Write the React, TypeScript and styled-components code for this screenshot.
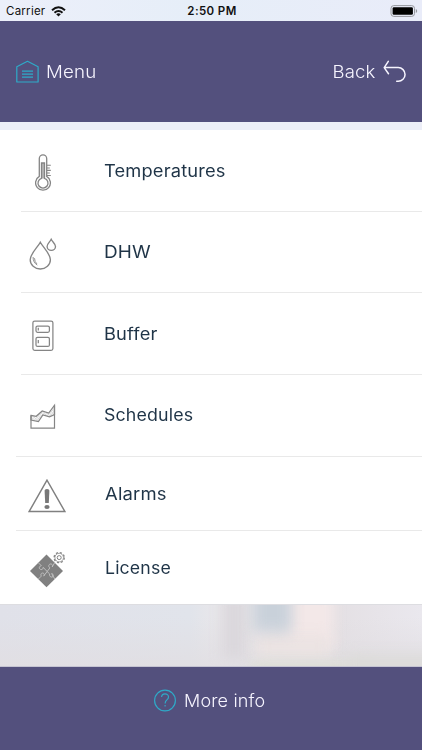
import React from "react";
import styled, { createGlobalStyle } from "styled-components";

const GlobalStyle = createGlobalStyle`
  * { box-sizing: border-box; }
  body { margin: 0; background: #e8ecf7; }
`;

const Screen = styled.div`
  width: 422px;
  height: 750px;
  display: flex;
  flex-direction: column;
  overflow: hidden;
  background: #eceef7;
  font-family: Inter, sans-serif;
`;

const StatusBar = styled.div`
  height: 21px;
  flex: none;
  display: grid;
  grid-template-columns: 1fr auto 1fr;
  align-items: center;
  padding: 1px 4px 0 6px;
  background: linear-gradient(90deg, #eceffa, #e6eef8 45%, #e9ecf9);
  color: #111;
  font-size: 11.5px;
  line-height: 20px;
`;

const Carrier = styled.div`
  display: flex;
  align-items: center;
  gap: 6px;
  letter-spacing: 0.25px;
`;

const Clock = styled.div`
  font-weight: 600;
  letter-spacing: 0.4px;
`;

const BatterySlot = styled.div`
  display: flex;
  justify-content: flex-end;
`;

const Header = styled.header`
  height: 101px;
  flex: none;
  display: flex;
  justify-content: space-between;
  align-items: flex-start;
  padding: 37px 16px 0;
  background: #53507d;
`;

const Action = styled.div<{ $gap: number }>`
  display: flex;
  align-items: center;
  gap: ${(p) => p.$gap}px;
  height: 26px;
`;

const Label = styled.span<{ $stretch: number; $light?: boolean; $drop?: number; $origin?: "left" | "right" }>`
  display: inline-block;
  justify-self: start;
  padding-top: ${(p) => (p.$drop ?? 0) * 2}px;
  font-size: 17px;
  line-height: 24px;
  white-space: nowrap;
  font-weight: ${(p) => (p.$light ? 300 : 400)};
  color: ${(p) => (p.$light ? "#f7f5ff" : "#1f3447")};
  letter-spacing: 0.15px;
  transform: scaleX(${(p) => p.$stretch});
  transform-origin: ${(p) => p.$origin ?? "left"} center;
`;

const List = styled.main`
  flex: none;
  height: 474px;
  margin-top: 8px;
  background: #fff;
`;

const Row = styled.div<{ $height: number; $inset: number; $shift: number; $text: number; $last?: boolean }>`
  height: ${(p) => p.$height}px;
  margin-left: ${(p) => p.$inset}px;
  padding-bottom: ${(p) => p.$shift}px;
  display: grid;
  grid-template-columns: ${(p) => p.$text - p.$inset}px 1fr;
  align-items: center;
  border-bottom: ${(p) => (p.$last ? "none" : "1px solid #e9e9e9")};
`;

const IconSlot = styled.div<{ $offset: number }>`
  display: flex;
  padding-left: ${(p) => p.$offset}px;
  height: 40px;
  margin-top: 4px;
`;

const Backdrop = styled.div`
  position: relative;
  height: 63px;
  flex: none;
  overflow: hidden;
  border-top: 1px solid #dddde1;
  border-bottom: 1px solid #c5c4d2;
  background:
    linear-gradient(180deg, rgba(225, 224, 229, 0) 20%, rgba(225, 222, 226, 0.8)),
    linear-gradient(90deg, #e0e1e9, #e1e4eb 45%, #e9e7ea 52%, #e4e0e4 80%, #eae8ee);
`;

const Haze = styled.div<{ $x: number; $y: number; $w: number; $h: number; $color: string }>`
  position: absolute;
  left: ${(p) => p.$x}px;
  top: ${(p) => p.$y}px;
  width: ${(p) => p.$w}px;
  height: ${(p) => p.$h}px;
  background: ${(p) => p.$color};
  filter: blur(7px);
`;

const Footer = styled.footer`
  flex: 1;
  display: flex;
  justify-content: center;
  align-items: flex-start;
  padding: 21px 8px 0 0;
  background: #53507d;
`;

const Wifi = () => (
  <svg width="15" height="11" viewBox="0 0 15 11" fill="none" stroke="#111" strokeWidth="2">
    <path d="M1 4.2Q7.5-1.6 14 4.2M3.5 6.7Q7.5 3.2 11.5 6.7" />
    <path d="M5.2 8.2Q7.5 6.4 9.8 8.2L7.5 10.5z" fill="#111" stroke="none" />
  </svg>
);

const Battery = () => (
  <svg width="28" height="12" viewBox="0 0 28 12">
    <rect x="1" y=".6" width="23.5" height="10.8" rx="2.8" fill="none" stroke="#96989e" />
    <rect x="2.6" y="2.2" width="20.3" height="7.6" rx="1.3" fill="#000" />
    <path d="M25.8 4v4q1.4-.5 1.4-2t-1.4-2z" fill="#96989e" />
  </svg>
);

const House = () => (
  <svg width="23" height="23" viewBox="0 0 23 23" fill="none" stroke="#2eabc9" strokeWidth="1.2">
    <path d="M.8 22V6.8L11.5 1.3 22.1 6.8V22z" strokeLinejoin="round" />
    <path d="M6 11.2h11M6 14.2h11M6 17.2h11" />
  </svg>
);

const BackArrow = () => (
  <svg width="23" height="23" viewBox="0 0 23 23" fill="none" stroke="#f7f5ff" strokeWidth="1.5" strokeLinecap="round" strokeLinejoin="round">
    <path d="M5.3 1.3L1.2 7.6l4.3 6.1M1.4 7.6h13.8a6.8 6.8 0 0 1 0 13.7h-1.5" />
  </svg>
);

const Question = () => (
  <svg width="23" height="24" viewBox="0 0 23 24" fill="none" stroke="#2eabc9" strokeWidth="1.15">
    <circle cx="11" cy="11.5" r="10.4" />
    <path d="M7.6 8.1C7.6 3.7 14.5 3.9 14.5 7.9c0 3.2-3.4 2.8-3.4 6.5M11.1 16v1.6" />
  </svg>
);

const Thermometer = () => (
  <svg width="18" height="40" viewBox="0 0 18 40" fill="none" stroke="#858585" strokeWidth="1.3">
    <path d="M4.3 23.4V5.6a3.7 3.7 0 0 1 7.4 0v17.8a7.4 7.4 0 1 1-7.4 0z" />
    <path d="M6.5 25.3V10h3v15.3a5 5 0 1 1-3 0z" />
    <path d="M7.5 10v15.5M8.5 10v15.5" strokeWidth=".6" />
    <path d="M12 12.3h3.8M12 15h2.8M12 17.4h3.8M12 20h2.8M12 22.5h3.8" strokeWidth="1.1" />
  </svg>
);

const Drops = () => (
  <svg width="28" height="40" viewBox="0 0 28 40" fill="none" stroke="#858585" strokeWidth="1.35">
    <path d="M11.3 8.2C9 13 1.2 19.7 1.2 25.7a10.1 9.3 0 0 0 20.2 0C21.4 19.7 13.8 13 11.3 8.2z" />
    <path d="M22.2 5.3c-1.2 2.6-4.1 4.6-4.1 7.1a4.2 4 0 0 0 8.4 0c0-2.5-3.1-4.5-4.3-7.1z" />
    <path d="M4.1 23q-.1 5.5 4.2 8.1M5.5 24.2q.1 3.7 2.4 5.7" strokeWidth=".9" />
  </svg>
);

const Tank = () => (
  <svg width="22" height="40" viewBox="0 0 22 40" fill="none" stroke="#858585" strokeWidth="1.25">
    <rect x=".9" y="5" width="20" height="29.3" rx="1.8" />
    <rect x="4" y="10" width="13.4" height="6.3" rx="1.5" />
    <rect x="4" y="21.3" width="13.4" height="9.1" rx="1.5" />
    <path d="M6.3 11.8v2.8M6.3 24v3.2" />
  </svg>
);

const AreaChart = () => (
  <svg width="26" height="40" viewBox="0 0 26 40" fill="none" stroke="#858585" strokeWidth="1.2">
    <defs>
      <pattern id="mesh" width="2" height="2" patternUnits="userSpaceOnUse" patternTransform="rotate(45)">
        <path d="M0 0h2M0 0v2" stroke="#aaa" strokeWidth=".6" />
      </pattern>
    </defs>
    <g transform="translate(0 4)">
      <path d="M1 14.4l5.2.9 6-5.3 6.5 2 5.8-7.8v9.3l-5 2.4-6.6-2-4.5 6.7L1 19z" fill="url(#mesh)" />
      <path d="M1 14.4v12.8h23.5v-23" />
    </g>
  </svg>
);

const Warning = () => (
  <svg width="38" height="40" viewBox="0 0 38 40">
    <path d="M19 4.2L1.2 35.4h35.6z" fill="none" stroke="#808080" strokeWidth="1.45" />
    <path d="M16.6 14.8q0-1.8 2.4-1.8t2.4 1.8l-.6 12.2h-3.6z" fill="#777" />
    <ellipse cx="19" cy="31" rx="2.6" ry="2.1" fill="#777" />
  </svg>
);

const Puzzle = () => (
  <svg width="38" height="40" viewBox="0 0 38 40" fill="none">
    <path d="M17.5 4.4L34 20.9 17.5 37.2 1 20.9z" fill="#808080" />
    <g transform="translate(0 -.8)" stroke="#c4c4c4" strokeWidth=".9">
      <path d="M9.3 13.5l3 3c-3.2.7-2.2 4.6.7 3.7 1.3-.4 1.2-2.1 1.2-2.1l3.3 3.6 3.1 3c-.8 3.5 3.6 4.4 3.6 1.4 0-1.7-1.6-1.7-1.6-1.7l3.1 5.3" />
      <path d="M9.3 29.9l3-3c-1.7-3.3 2.6-4.2 3-1.4.1 1-.6 1.3-.6 1.3l6.2-8.1c-3-2.2.4-5.4 2.4-3.1.9 1.1-.2 2.2-.2 2.2l2.6-4.3" />
    </g>
    <circle cx="30.2" cy="7.6" r="5" stroke="#888" strokeWidth="1.5" strokeDasharray="2.1 1.83" />
    <circle cx="30.2" cy="7.6" r="4.3" stroke="#888" strokeWidth=".8" fill="#fff" />
    <circle cx="30.2" cy="7.6" r="2" stroke="#777" strokeWidth=".9" />
  </svg>
);

const items = [
  { label: "Temperatures", stretch: 1.075, height: 82, inset: 21, text: 104, shift: 0, offset: 14, icon: <Thermometer /> },
  { label: "DHW", stretch: 1.115, height: 81, inset: 21, text: 104, shift: 0, offset: 8, icon: <Drops /> },
  { label: "Buffer", stretch: 1.075, height: 82, inset: 21, text: 104, shift: 0, offset: 11, icon: <Tank /> },
  { label: "Schedules", stretch: 1.045, height: 82, inset: 16, text: 104, shift: 2, offset: 14, icon: <AreaChart /> },
  { label: "Alarms", stretch: 1.085, height: 74, inset: 16, text: 105, shift: 0, offset: 12, icon: <Warning /> },
  { label: "License", stretch: 1.04, height: 73, inset: 16, text: 105, shift: 0, offset: 13, icon: <Puzzle />, last: true },
];

export default function App() {
  return (
    <Screen>
      <GlobalStyle />
      <StatusBar>
        <Carrier>Carrier <Wifi /></Carrier>
        <Clock>2:50 PM</Clock>
        <BatterySlot><Battery /></BatterySlot>
      </StatusBar>
      <Header>
        <Action $gap={7}><House /><Label $light $drop={1} $stretch={1.1}>Menu</Label></Action>
        <Action $gap={8}><Label $light $drop={1} $origin="right" $stretch={1.09}>Back</Label><BackArrow /></Action>
      </Header>
      <List>
        {items.map((item) => (
          <Row key={item.label} $height={item.height} $inset={item.inset} $text={item.text} $shift={item.shift} $last={item.last}>
            <IconSlot $offset={item.offset}>{item.icon}</IconSlot>
            <Label $stretch={item.stretch}>{item.label}</Label>
          </Row>
        ))}
      </List>
      <Backdrop>
        <Haze $x={222} $y={-12} $w={24} $h={66} $color="#dad7dc" />
        <Haze $x={290} $y={-12} $w={44} $h={56} $color="#f3e8e8" />
        <Haze $x={256} $y={30} $w={74} $h={22} $color="#ebe3e2" />
        <Haze $x={253} $y={-16} $w={38} $h={42} $color="#c9d1da" />
        <Haze $x={252} $y={60} $w={120} $h={14} $color="#dadfcf" />
        <Haze $x={345} $y={50} $w={95} $h={20} $color="#dcdbd9" />
      </Backdrop>
      <Footer>
        <Action $gap={7}><Question /><Label $light $stretch={1.06}>More info</Label></Action>
      </Footer>
    </Screen>
  );
}
